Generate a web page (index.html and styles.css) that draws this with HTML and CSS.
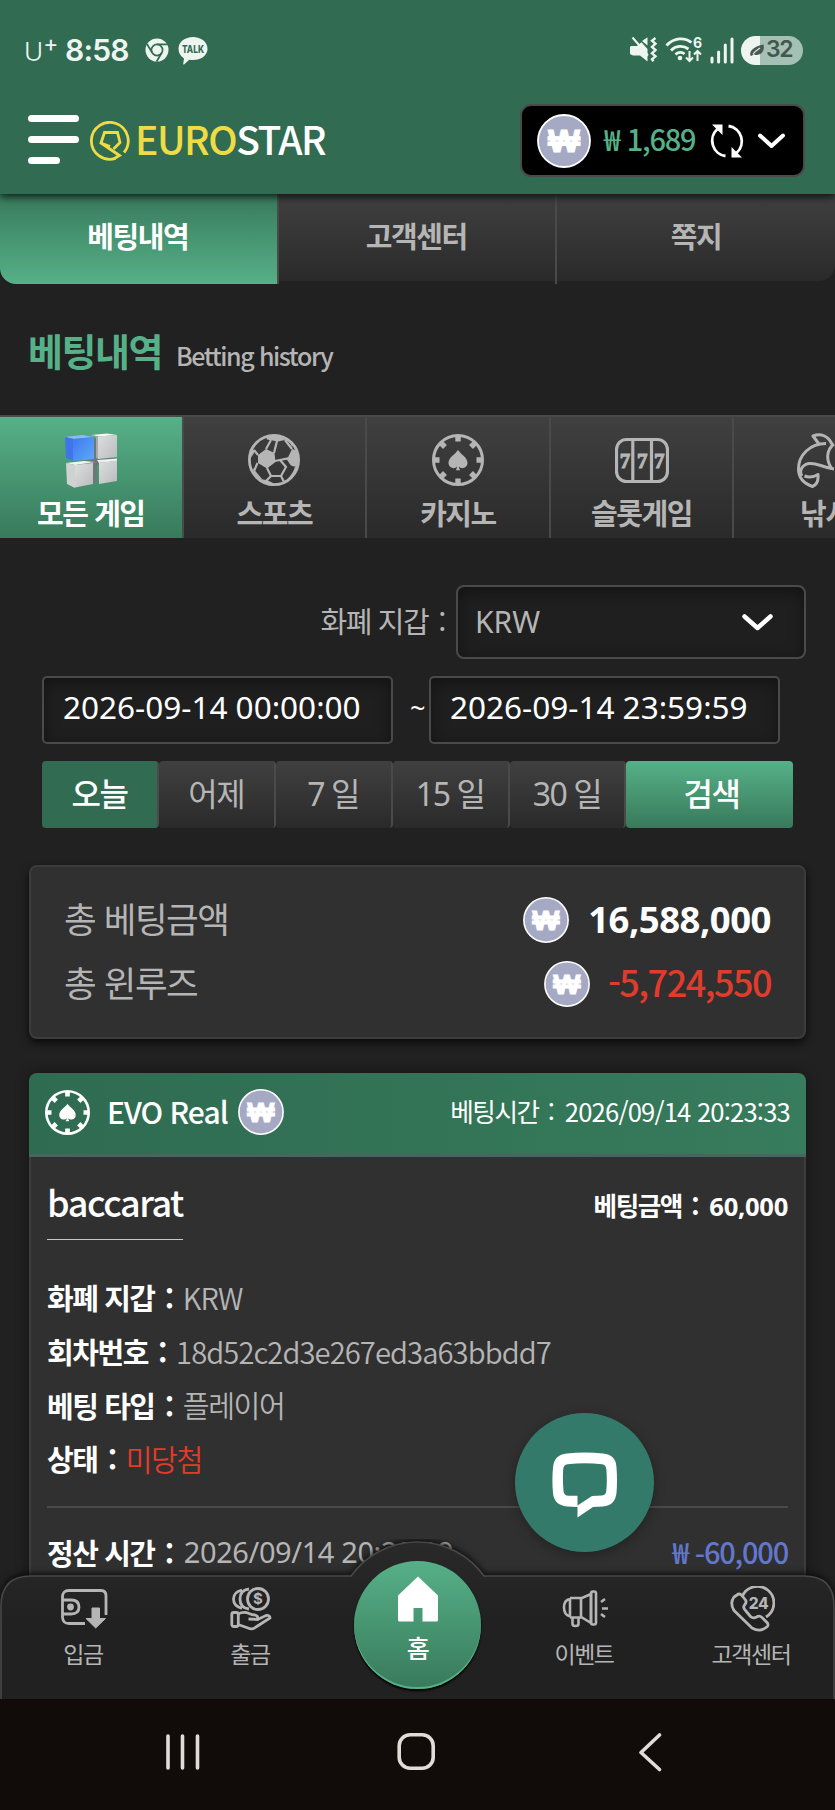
FILE: index.html
```html
<!DOCTYPE html>
<html lang="ko">
<head>
<meta charset="utf-8">
<title>EUROSTAR - 베팅내역</title>
<link rel="stylesheet" href="styles.css">
</head>
<body>
<svg class="defs" width="0" height="0" aria-hidden="true">
  <symbol id="coin" viewBox="0 0 54 54">
    <circle cx="27" cy="27" r="26" fill="#a6a9c3" stroke="#fff" stroke-width="1.8"/>
    <text class="coin-text" x="27" y="38.300" text-anchor="middle" textLength="32" lengthAdjust="spacingAndGlyphs">₩</text>
  </symbol>
  <symbol id="chip" viewBox="0 0 52 52">
    <circle cx="26" cy="26" r="24.5" fill="none" stroke="currentColor" stroke-width="3"/>
    <g stroke="currentColor" stroke-width="5.4">
      <path d="M26 2v5.5M26 44.500v5.5M2 26h5.500M44.500 26h5.500M9 9l4 4M39 39l4 4M9 43l4-4M39 13l4-4"/>
    </g>
    <path fill="currentColor" d="M26 16c3 4.500 9.500 7.500 9.500 12.800 0 5-6 7-8.600 3.800.2 1.500.5 2.400 1.300 3.600h-4.400c.8-1.200 1.100-2.100 1.300-3.600-2.600 3.200-8.600 1.200-8.600-3.800C16.500 23.500 23 20.500 26 16z"/>
  </symbol>
</svg>

<div class="screen">
  <div class="statusbar">
    <span class="carrier">U<span class="plus">+</span></span>
    <span class="clock">8:58</span>
    <svg class="ic-chrome" width="24" height="24" viewBox="0 0 24 24">
      <circle cx="12" cy="12" r="11.500" fill="#eef5f1"/>
      <circle cx="12" cy="12" r="5.600" fill="none" stroke="#306b52" stroke-width="1.700"/>
      <path d="M12 6.400h10.500M7.200 14.800L2 6M16.800 14.800L11.600 23.500" stroke="#306b52" stroke-width="1.700"/>
    </svg>
    <svg class="ic-talk" width="30" height="28" viewBox="0 0 30 28">
      <path fill="#eef5f1" d="M15 0c8 0 14.500 5 14.500 11.700S23 23 15 23c-1.300 0-2.500-.1-3.700-.3L6 27.500c-.6.300-.9 0-.8-.6l.8-5.500C2.500 19.300.5 15.800.5 11.700.5 5 7 0 15 0z"/>
      <text class="talk-text" x="15" y="15.800" text-anchor="middle" textLength="22" lengthAdjust="spacingAndGlyphs">TALK</text>
    </svg>
    <span class="spacer"></span>
    <svg width="28" height="28" viewBox="0 0 28 28">
      <path fill="#eef5f1" d="M1 10h6l4.500-3.700L17.500 13v12.500L10 19.500H3L0 18v-7zM12 5l5.500-3.800V9.500z"/>
      <path d="M2.500 1.500l15.500 18" stroke="#eef5f1" stroke-width="2"/>
      <path d="M25.500 2l-3.500 2.700 3.500 3-3.500 3.300 3.500 3-3.500 3.300 3.500 3-3.500 3 1.500 2" fill="none" stroke="#eef5f1" stroke-width="2.400"/>
    </svg>
    <svg class="ic-wifi" width="37" height="28" viewBox="0 0 37 28">
      <path d="M1.500 9.500C9 1.500 19.500 1 26.500 6.500M6 14.500c4.500-5 12-5.500 17.500-1.500M10.500 18.500c2.500-2.500 6.500-2.800 9-.5" fill="none" stroke="#eef5f1" stroke-width="2.800"/>
      <circle cx="15" cy="22" r="2.300" fill="#eef5f1"/>
      <path d="M24.500 15v9.500m-3.500-3l3.500 3.500 3.500-3.500M32.500 25v-9.500m-3.500 3l3.500-3.500 3.500 3.500" fill="none" stroke="#eef5f1" stroke-width="2"/>
      <text class="wifi-text" x="28" y="11.500">6</text>
    </svg>
    <svg class="ic-signal" width="24" height="27" viewBox="0 0 24 27">
      <path d="M2 21v4M8.600 15v10M15.300 8v17M22 2v23" stroke="#eef5f1" stroke-width="3" stroke-linecap="round"/>
    </svg>
    <span class="battery">
      <svg width="16" height="14" viewBox="0 0 16 14"><path fill="#4a5a52" d="M1.500 12.500C0 9.500 3 3.500 14.500 1.500 16 7 13 12 7.500 12c-1.500 0-2-.3-2.500-1l-2.500 2z"/><path d="M4 11c2-2.500 4-4 7-6" stroke="#dfe9e4" stroke-width="1.200" fill="none"/></svg>
      <b>32</b>
    </span>
  </div>

  <header class="header">
    <div class="burger"><i></i><i></i><i></i></div>
    <div class="logo">
      <svg width="40" height="40" viewBox="0 0 40 40" fill="none" stroke="#efdc45" stroke-width="2.800">
        <path d="M25.500 37.300A18.400 18.400 0 1 1 34 31.500"/>
        <path d="M20 25.500l-9-3.500 3.500-10.500h13l2.500 10-6.500 6.500M11 22l18.500 12.500-6 3.500"/>
      </svg>
      <span class="logo-text"><em>EURO</em>STAR</span>
    </div>
    <div class="wallet">
      <svg width="54" height="54"><use href="#coin"/></svg>
      <span class="wallet-sum">₩ 1,689</span>
      <svg class="ic-refresh" width="34" height="34" viewBox="0 0 34 34">
        <path d="M15.500 32A15.500 15.500 0 0 1 7.500 5M18.500 2A15.500 15.500 0 0 1 26.500 29" fill="none" stroke="#fff" stroke-width="2.800"/>
        <path fill="#fff" d="M2 .5h10.500V11zM32 33.500H21.500V23z"/>
      </svg>
      <svg width="27" height="16" viewBox="0 0 27 16"><path d="M2 2.500l11.500 10.500L25 2.500" fill="none" stroke="#fff" stroke-width="4" stroke-linecap="round" stroke-linejoin="round"/></svg>
    </div>
  </header>

  <nav class="tabs">
    <a class="tab active">베팅내역</a><a class="tab">고객센터</a><a class="tab">쪽지</a>
  </nav>

  <div class="title"><h1>베팅내역</h1><span>Betting history</span></div>

  <div class="games">
    <a class="game active">
      <svg width="52" height="56" viewBox="0 0 52 56">
        <defs>
          <linearGradient id="gb" x1="0" y1="0" x2="1" y2="1"><stop offset="0" stop-color="#3f78f0"/><stop offset="1" stop-color="#5eaaf8"/></linearGradient>
          <linearGradient id="gw" x1="0" y1="0" x2="1" y2="1"><stop offset="0" stop-color="#dedfdf"/><stop offset="1" stop-color="#b8bbbc"/></linearGradient>
        </defs>
        <path fill="#6d7874" d="M26 4l6 2v20l19-1v4l-19 3v17l-5 2V30L4 31l24-5z"/>
        <path fill="#8dbaff" d="M0 4l17-2 12 2-20 2z"/><path fill="#3f74ea" d="M0 4l9 2v22L1 25z"/><path fill="url(#gb)" d="M8 6l21-2v22L8 28z"/>
        <path fill="#f6f6f6" d="M26 2l16-1.500L52 2l-18 1.500z"/><path fill="#a5a9a8" d="M26 2l8 1.500V26l-3-1V4z"/><path fill="url(#gw)" d="M33 3.500L52 2v22l-19 2z"/>
        <path fill="#f2f2f2" d="M1 30l18-2 11 1-20 3z"/><path fill="#d0d2d2" d="M1 30l9 2v23l-8-4z"/><path fill="url(#gw)" d="M10 32l18-2V51l-18 3.500z"/>
        <path fill="#efefef" d="M32 27l20-1.500V28l-18 2z"/><path fill="url(#gw)" d="M34 30l18-2.500V48l-18 3z"/>
      </svg>
      <span>모든 게임</span>
    </a>
    <a class="game">
      <svg width="52" height="56" viewBox="0 0 52 56">
        <g transform="translate(0 1)">
        <circle cx="26" cy="26" r="24.600" fill="none" stroke="currentColor" stroke-width="2.800"/>
        <path fill="currentColor" d="M10 21l8-6 8.500 4 1 9-8.500 6.500-9-5.500zM39.500 24.500l4.500-9.500 5.500 2L51 26l-2 7-5-1zM18.500 3.500L26 0l9 2.500L37 6l-7 1.500-11-2zM13 45l7 1.500 8 4-3 1.500-8-2zM2 15l5 1-1 3-4 6-1-3zM5 34l4 5 5 6-2 1-6-7z"/>
        <path d="M26 19l3-12M27 27l12.500-2.500L44 31M18 15l5-9M10 21l-4-5M9.500 29L6 37M19 34l4 8-5 5M23 42h10l5-9-6-7M33 42l3 6M37 6l7 9M34 3c5 1.500 9 5 11 9M40 46c4-4 7-8 8-13" fill="none" stroke="currentColor" stroke-width="2.200"/>
        </g>
      </svg>
      <span>스포츠</span>
    </a>
    <a class="game">
      <svg width="52" height="54"><use href="#chip" width="52" height="52" y="1"/></svg>
      <span>카지노</span>
    </a>
    <a class="game">
      <svg width="54" height="56" viewBox="0 0 54 56">
        <rect x="1.500" y="6.500" width="51" height="42" rx="10" fill="none" stroke="currentColor" stroke-width="3.200"/>
        <path d="M17.800 6v43M36.500 6v43" stroke="currentColor" stroke-width="3.200"/>
        <g class="sevens"><text x="9.900" y="35">7</text><text x="27.200" y="35">7</text><text x="44.300" y="35">7</text></g>
      </svg>
      <span>슬롯게임</span>
    </a>
    <a class="game">
      <svg width="56" height="56" viewBox="0 0 56 56" fill="none" stroke="currentColor" stroke-width="3" stroke-linejoin="round">
        <path d="M29 10.500C13 10.500 1.500 22 1.500 36c0 8 4 14 14 17.500 4-1.500 6-6 5.500-12-5 3-9.500 3-13.500 1.500M5 43C2 39 4 32 12 30.500c8-1 12 3.500 25 5.500M22 11l-6-8c8-3 15 0 19 8M37 11c-8 6-8 17-2 25"/>
      </svg>
      <span>낚시</span>
    </a>
  </div>

  <main class="main">
    <div class="currency">
      <label>화폐 지갑<i class="colon"> :</i></label>
      <div class="select"><span>KRW</span>
        <svg width="31" height="19" viewBox="0 0 31 19"><path d="M2.500 3.500l13 11.500L28.500 3.500" fill="none" stroke="#fff" stroke-width="4.500" stroke-linecap="round" stroke-linejoin="round"/></svg>
      </div>
    </div>
    <div class="dates">
      <div class="date">2026-09-14 00:00:00</div><span class="tilde">~</span><div class="date">2026-09-14 23:59:59</div>
    </div>
    <div class="ranges">
      <a class="range on">오늘</a><a class="range">어제</a><a class="range">7 일</a><a class="range">15 일</a><a class="range">30 일</a><a class="search">검색</a>
    </div>

    <section class="summary">
      <div class="sum-row"><span>총 베팅금액</span><div class="sum-val"><svg width="46" height="46"><use href="#coin"/></svg><b class="total">16,588,000</b></div></div>
      <div class="sum-row"><span>총 윈루즈</span><div class="sum-val"><svg width="46" height="46"><use href="#coin"/></svg><b class="loss">-5,724,550</b></div></div>
    </section>

    <article class="card">
      <div class="card-head">
        <svg class="card-chip" width="45" height="45"><use href="#chip"/></svg>
        <b class="provider">EVO Real</b>
        <svg width="46" height="46"><use href="#coin"/></svg>
        <span class="bet-time">베팅시간<i class="colon"> :</i> <span>2026/09/14 20:23:33</span></span>
      </div>
      <div class="card-body">
        <div class="game-line"><b class="game-name">baccarat</b><b class="bet-sum">베팅금액<i class="colon"> :</i> <span>60,000</span></b></div>
        <dl class="fields">
          <div><dt>화폐 지갑<i class="colon"> :</i></dt><dd class="latin">KRW</dd></div>
          <div><dt>회차번호<i class="colon"> :</i></dt><dd class="latin">18d52c2d3e267ed3a63bbdd7</dd></div>
          <div><dt>베팅 타입<i class="colon"> :</i></dt><dd>플레이어</dd></div>
          <div><dt>상태<i class="colon"> :</i></dt><dd class="lost">미당첨</dd></div>
        </dl>
        <div class="settle"><b>정산 시간<i class="colon"> :</i></b><span class="settle-time">2026/09/14 20:23:39</span><span class="settle-sum">₩ -60,000</span></div>
      </div>
    </article>
  </main>

  <div class="chat">
    <svg width="66" height="66" viewBox="0 0 66 66"><path fill="#fff" fill-rule="evenodd" d="M15 1.500Q33-.5 51 1.500 64 2.500 64.500 15.500 65.500 28 64.500 41 63 53.500 51 54.500L41 55 25.500 65.500V55L15 54.500Q2 53 1 41-.2 28 1 15.500 2 2.500 15 1.500zM15.500 12.200Q11.500 13 11.200 17 10.500 28 11.500 39 12 43.500 16.500 43.800H25.500V53.500L40 44 50 43.500Q54 43 54.300 39 55.300 28 54.300 17 54 13 50 12.200 33 10.500 15.500 12.200z"/></svg>
  </div>

  <div class="dock">
    <svg class="dock-bg" width="835" height="160" viewBox="0 0 835 160">
      <defs><linearGradient id="dg" x1="0" y1="0" x2="0" y2="1"><stop offset="0" stop-color="#292929"/><stop offset=".5" stop-color="#212121"/></linearGradient></defs>
      <path class="dock-shape" fill="url(#dg)" stroke="#484848" stroke-width="1.600" d="M1 162V67Q1 37 31 37H351A82 82 0 0 1 484 37H804Q834 37 834 67V162z"/>
    </svg>
    <div class="dock-items">
      <a><svg width="48" height="42" viewBox="0 0 48 42" fill="none" stroke="currentColor" stroke-width="2.800">
        <path d="M25 35.500H9Q2.500 35.500 2.500 29V9Q2.500 2.500 9 2.500H41Q46 2.500 46 8V27"/><path d="M3 12h8q8 0 8 7t-8 7H3"/><circle cx="10.500" cy="19" r="2" fill="currentColor"/><path fill="currentColor" stroke-width="1" d="M32 20h7.500v10.500h6L35.700 40 26 30.500h6z"/></svg><span>입금</span></a>
      <a><svg width="42" height="44" viewBox="0 0 42 44" fill="none" stroke="currentColor" stroke-width="2.800">
        <circle cx="28" cy="12" r="10.500"/><path d="M19 2Q10 3 10 12t9 10M12 3Q3.500 5 3.500 12T12 21.500"/><rect x="1.800" y="25.500" width="6.500" height="14" rx="2"/>
        <path d="M8 27q6-3 11-.5 3 1.500 6 1.500 3.500 1 2.500 4.500l-9-.5M27.500 32.500L36 28.500q4-.5 4 2.500L26 40q-4 3-8 1L8 37.500"/><text class="dollar" x="28" y="17.300">$</text></svg><span>출금</span></a>
      <a class="home-slot"></a>
      <a><svg width="46" height="44" viewBox="0 0 46 44" fill="none" stroke="currentColor" stroke-width="2.600">
        <path d="M8 11h12L29 7V36L20 30.500H8M8 11v19.500M8 12Q2 13 2 20.500T8 29.500M19 11v19.500M10.500 31v6q0 2 3 2t3-2V31"/><rect x="29" y="4.500" width="5" height="33" rx="2"/><path d="M39 15l4-3M40 21.500h6M39 27l4 3"/></svg><span>이벤트</span></a>
      <a><svg width="46" height="46" viewBox="0 0 46 46" fill="none" stroke="currentColor" stroke-width="2.800" stroke-linejoin="round">
        <path d="M13 11A16.500 16.500 0 1 1 37 31"/><path d="M8 9Q10 7 12.500 9l4 5q1.500 2.500-1 5-2 2.500 1 5.500l5 6q2.500 2.500 6 .5 3-2 5.500.5l5 5q2.500 3-1 5-6 5-14 .5L5 24.500Q.5 17 5 11z"/><text class="t24" x="29.500" y="22.500">24</text></svg><span>고객센터</span></a>
    </div>
    <a class="home"><svg width="42" height="46" viewBox="0 0 42 46"><path fill="#fff" d="M21 .5L41 19.500V44q0 1.500-1.500 1.500H25.500V32h-9V45.500H2.500Q1 45.500 1 44V19.500z"/></svg><span>홈</span></a>
  </div>

  <div class="sysbar">
    <svg width="835" height="111" viewBox="0 0 835 111" fill="none" stroke="#e2dcd8" stroke-width="3.600" stroke-linecap="round" stroke-linejoin="round">
      <path d="M168 37v32M182.500 37v32M197.500 37v32M659.500 36L641 53.500 659.500 70.500"/>
      <rect x="399.200" y="35.700" width="34" height="33.600" rx="11"/>
    </svg>
  </div>
</div>
</body>
</html>
```
FILE: styles.css
```css
* { box-sizing: border-box; margin: 0; padding: 0; }
body { background: #212121; }
.defs { position: absolute; }
svg { display: block; flex: none; }
.screen {
  position: relative; width: 835px; height: 1810px; overflow: hidden;
  display: flex; flex-direction: column; background: #212121; color: #b5b5b5;
  font-family: "Noto Sans CJK KR", sans-serif; font-size: 29px; line-height: 1.2;
  letter-spacing: -0.05em; white-space: nowrap;
}
.screen > * { flex: none; }
.coin-text { font: 700 32px "Liberation Sans", sans-serif; fill: #fff; stroke: #fff; stroke-width: 1; letter-spacing: 0; }
.colon { font-style: normal; padding: 0 4px 0 3.500px; }

/* status bar */
.statusbar { position: relative; z-index: 3; height: 100px; padding: 0 32px 0 24px; display: flex; align-items: center; background: #306b52; color: #eef5f1; font-family: Inter, sans-serif; letter-spacing: 0; }
.carrier { font-size: 26px; font-weight: 300; width: 41px; line-height: 44px; display: flex; align-items: flex-start; padding-top: 3px; }
.plus { font-size: 23px; font-weight: 400; line-height: 28px; }
.clock { font-size: 30px; font-weight: 600; width: 80px; letter-spacing: -.8px; }
.ic-talk { margin: 2px 0 0 9px; }
.talk-text { font: 800 10px Inter, sans-serif; fill: #306b52; }
.spacer { flex: 1; }
.ic-wifi { margin-left: 7px; overflow: visible; }
.wifi-text { font: 700 14px Inter, sans-serif; fill: #eef5f1; }
.ic-signal { margin-left: 8px; }
.battery { margin-left: 7px; width: 62px; height: 29px; border-radius: 15px; display: flex; align-items: center; padding-left: 8px; background: linear-gradient(90deg, #eef5f1 19px, #a5c0b4 19px); }
.battery b { font-size: 23px; font-weight: 600; color: #42584d; letter-spacing: -1.5px; margin-left: 1px; }

/* header */
.header { position: relative; z-index: 2; height: 94px; padding: 0 30px 13px 28px; display: flex; align-items: center; background: #306b52; box-shadow: 0 3px 8px rgba(0,0,0,.75); }
.burger { display: flex; flex-direction: column; gap: 13.500px; margin-top: -2px; }
.burger i { width: 51px; height: 7.500px; border-radius: 4px; background: #fff; }
.burger i:last-child { width: 32px; }
.logo { display: flex; align-items: center; margin-left: 11px; gap: 5px; }
.logo-text { font-size: 39px; font-weight: 500; line-height: 54px; color: #fff; margin-top: -6px; }
.logo-text em { font-style: normal; color: #efdc45; }
.wallet { margin-left: auto; width: 285px; height: 73px; border: 2px solid #4a4a4a; border-radius: 11px; background: #000; display: flex; align-items: center; padding-left: 15px; }
.wallet-sum { width: 119px; padding: 0 0 4px 13px; color: #56b088; font-weight: 500; font-size: 29px; letter-spacing: -1.2px; word-spacing: 2px; }
.ic-refresh { margin-right: 14px; }

/* top tabs */
.tabs { height: 90px; display: flex; border-radius: 0 0 16px 16px; overflow: hidden; font-weight: 700; }
.tab { flex: none; width: 278.500px; height: 90px; display: flex; align-items: center; justify-content: center; padding: 0 3px 7px 0; background: linear-gradient(#404040, #2a2a2a) 0 0 / 100% 87px no-repeat; box-shadow: inset -2px 0 #4a4a4a; }
.tab:last-child { width: 278px; height: 87px; padding: 0 0 4px; box-shadow: none; border-radius: 0 0 16px 0; }
.tab.active { background: linear-gradient(#387a5b, #56b088); color: #fff; }

.title { height: 131px; padding: 0 28px; display: flex; align-items: baseline; line-height: 131px; gap: 14px; }
.title h1 { font-size: 38px; font-weight: 700; color: #56b088; }
.title span { font-size: 25px; font-weight: 500; letter-spacing: -1.400px; }

/* game categories */
.games { height: 124px; display: flex; border-top: 2px solid #4a4a4a; }
.game { flex: none; width: 183.600px; height: 121px; display: flex; flex-direction: column; align-items: center; padding-top: 16px; font-weight: 700; background: linear-gradient(#404040, #2a2a2a); border-right: 2px solid #4a4a4a; }
.game span { line-height: 40px; margin-top: auto; padding-bottom: 6px; }
.game.active { background: linear-gradient(#56b088, #387a5b); color: #fff; }
.sevens text { font: 700 21px "Liberation Serif", serif; fill: currentColor; text-anchor: middle; stroke: currentColor; stroke-width: 1; letter-spacing: 0; }

/* filters */
.main { padding: 46px 29px 0; display: flex; flex-direction: column; }
.currency { display: flex; align-items: center; justify-content: flex-end; height: 74px; gap: 7px; }
.currency label { padding-bottom: 3px; }
.select { width: 350px; height: 74px; border: 2px solid #4a4a4a; border-radius: 8px; background: #1f1f1f; box-shadow: inset 0 4px 16px rgba(0,0,0,.4); display: flex; align-items: center; justify-content: space-between; padding: 0 31px 0 17px; font-family: "Noto Sans", sans-serif; font-size: 30px; letter-spacing: 0; }
.dates { margin: 17px 0 0 13px; display: flex; height: 68px; }
.date { width: 351px; border: 2px solid #4a4a4a; border-radius: 5px; background: #1f1f1f; box-shadow: inset 0 4px 16px rgba(0,0,0,.4); padding-left: 19px; line-height: 58px; color: #fff; font-family: "Noto Sans", sans-serif; font-size: 31.500px; letter-spacing: 0; }
.tilde { width: 36px; padding-left: 17px; line-height: 64px; color: #fff; font-size: 27px; font-family: "Noto Sans", sans-serif; }
.ranges { margin: 17px 0 0 13px; height: 67px; display: flex; font-size: 32px; }
.range, .search { width: 116.900px; display: flex; align-items: center; justify-content: center; border-radius: 4px; font-family: "Noto Sans", "Noto Sans CJK KR", sans-serif; background: linear-gradient(#404040, #2a2a2a); border-right: 2px solid #4a4a4a; }
.range.on { background: #306b52; color: #fff; font-weight: 500; }
.search { width: 167px; background: linear-gradient(#56b088, #387a5b); color: #fff; border: 0; font-weight: 500; padding-left: 3px; }

/* summary */
.summary { margin-top: 37px; height: 174px; border: 2px solid #3c3c3e; border-radius: 8px; background: #303030; box-shadow: 0 4px 8px rgba(0,0,0,.7); padding: 21px 33px 0 33px; }
.sum-row { height: 64px; display: flex; align-items: center; justify-content: space-between; font-size: 35.500px; }
.sum-row > span { padding-bottom: 3px; }
.sum-val { display: flex; align-items: center; }
.total { margin-left: 19px; font-family: "Noto Sans", sans-serif; font-size: 36.500px; font-weight: 700; color: #fff; letter-spacing: -.5px; padding-bottom: 1px; }
.loss { margin-left: 18px; font-size: 36px; font-weight: 500; color: #e23b2b; letter-spacing: -1.500px; padding-bottom: 4px; }

/* betting card */
.card { margin-top: 34px; height: 560px; border-radius: 8px 8px 0 0; box-shadow: 0 0 14px rgba(0,0,0,.4); overflow: hidden; }
.card-head { height: 84px; padding: 0 16px 3px 16px; display: flex; align-items: center; color: #fff; background: linear-gradient(90deg, #2f6b51, #377c5c); border-bottom: 3px solid #46665f; }
.provider { font-size: 30px; font-weight: 500; margin: 0 10px 2px 17px; letter-spacing: -1px; }
.bet-time { margin-left: auto; font-size: 25.600px; padding-bottom: 1px; }
.bet-time span { letter-spacing: -.8px; }
.bet-time .colon, .bet-sum .colon { padding-right: 5.500px; }
.card-body { height: 476px; padding: 0 16px; background: #303030; border: solid #3d3d40; border-width: 0 2px; }
.game-line { height: 83px; display: flex; justify-content: space-between; color: #fff; }
.game-name { font-size: 36px; font-weight: 500; height: 83px; line-height: 88px; border-bottom: 1px solid #c8c8c8; }
.bet-sum { font-size: 25.600px; line-height: 96px; font-weight: 700; }
.bet-sum span { font-family: "Noto Sans", sans-serif; letter-spacing: -.3px; }
.fields { padding-top: 31px; height: 268px; border-bottom: 2px solid #4a4a4a; }
.fields div { display: flex; height: 53.600px; align-items: center; gap: 6px; }
.fields dt, .settle b { color: #fff; font-weight: 700; }
.fields dd { font-size: 29.200px; font-weight: 350; }
.fields .latin { letter-spacing: -.93px; }
.fields .lost { color: #e23b2b; }
.settle { display: flex; align-items: center; height: 88px; }
.settle-time { margin-left: 7px; font-family: "Noto Sans", sans-serif; letter-spacing: -.4px; font-size: 29px; }
.settle-sum { margin-left: auto; color: #6377cc; font-weight: 500; font-size: 29px; letter-spacing: -1.2px; word-spacing: 1.500px; padding-bottom: 2px; }

/* floating chat button */
.chat { position: absolute; left: 515px; top: 1413px; width: 139px; height: 139px; border-radius: 50%; background: #347a6a; display: flex; align-items: center; justify-content: center; box-shadow: 0 3px 12px rgba(0,0,0,.3); padding-top: 4px; }

/* bottom dock */
.dock { position: absolute; left: 0; top: 1539px; width: 835px; height: 160px; }
.dock-bg { position: absolute; left: 0; top: 0; }
.dock-shape { filter: drop-shadow(0 -2px 3px rgba(0,0,0,.7)); }
.dock-items { position: relative; display: flex; height: 160px; padding-top: 47px; }
.dock-items a { flex: 1; display: flex; flex-direction: column; align-items: center; font-size: 23px; }
.dock-items svg { height: 46px; }
.dock-items span { line-height: 32px; margin: 5px 1px 0 0; }
.dollar { font: 700 15px Inter, sans-serif; fill: currentColor; stroke: none; text-anchor: middle; letter-spacing: 0; }
.t24 { font: 800 15.500px Inter, sans-serif; fill: currentColor; stroke: none; text-anchor: middle; letter-spacing: -.5px; }
.home { position: absolute; left: 354px; top: 22px; width: 127px; height: 128px; border-radius: 50%; background: linear-gradient(#56b088, #387a5b); box-shadow: 0 2px 2px #000, inset 0 -2px #56b088; color: #fff; display: flex; flex-direction: column; align-items: center; padding-top: 15px; font-size: 25px; font-weight: 500; }
.home span { line-height: 34px; margin-top: 8px; }

.sysbar { position: absolute; left: 0; top: 1699px; width: 835px; height: 111px; background: #110c09; }
```
